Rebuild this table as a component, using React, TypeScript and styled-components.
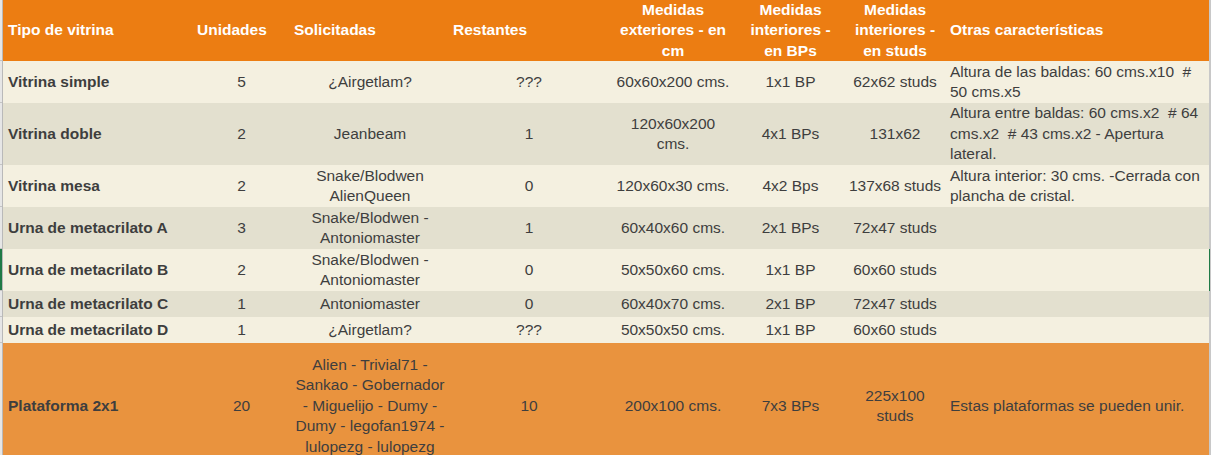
import React from "react";
import styled, { createGlobalStyle, css } from "styled-components";

const GlobalStyle = createGlobalStyle`
  html, body { margin: 0; padding: 0; background: #ffffff; }
  body { font-family: "Liberation Sans", Arial, sans-serif; overflow: hidden; }
`;

const COLS = "3px 190px 97px 160px 158px 130px 105px 104px 262px 2px";

type Tone = "header" | "light" | "alt" | "accent";

const toneBg: Record<Tone, string> = {
  header: "#ec7d12",
  light: "#f4f0e0",
  alt: "#e3e0cf",
  accent: "#e9933e",
};

const Sheet = styled.div`
  width: 1211px;
  display: flex;
  flex-direction: column;
`;

const Row = styled.div<{ $h: number; $tone: Tone }>`
  display: grid;
  grid-template-columns: ${COLS};
  height: ${(p) => p.$h}px;
  flex: none;
  background: ${(p) => toneBg[p.$tone]};
  color: ${(p) => (p.$tone === "header" ? "#ffffff" : "#3e3e3e")};
  font-weight: ${(p) => (p.$tone === "header" ? 700 : 400)};
`;

const LeftGutter = styled.div<{ $marked?: boolean }>`
  background: ${(p) => (p.$marked ? "#1f7a46" : "#e6e6e6")};
  border-right: 1px solid #b9b9b9;
  box-shadow: inset 0 -1px 0 #c4c4c4;
`;

const RightGutter = styled.div<{ $marked?: boolean }>`
  background: #c8c8c8;
  border-left: 1px solid ${(p) => (p.$marked ? "#1f7a46" : "#c8c8c8")};
`;

const Cell = styled.div<{ $align?: "left" | "center"; $bold?: boolean; $pad?: number }>`
  display: flex;
  flex-direction: column;
  justify-content: center;
  align-items: ${(p) => (p.$align === "left" ? "flex-start" : "center")};
  text-align: ${(p) => (p.$align === "left" ? "left" : "center")};
  padding: 0 ${(p) => p.$pad ?? 3}px;
  font-size: 15.5px;
  line-height: 20.5px;
  white-space: pre;
  overflow: hidden;
  ${(p) =>
    p.$bold &&
    css`
      font-weight: 700;
    `}
`;

const Line = styled.span`
  display: block;
`;

type Data = {
  name: string;
  u: string;
  sol: string[];
  rest: string;
  ext: string[];
  bp: string[];
  studs: string[];
  otras: string[];
  h: number;
  tone: Tone;
  selected?: boolean;
};

const rows: Data[] = [
  {
    name: "Vitrina simple",
    u: "5",
    sol: ["¿Airgetlam?"],
    rest: "???",
    ext: ["60x60x200 cms."],
    bp: ["1x1 BP"],
    studs: ["62x62 studs"],
    otras: ["Altura de las baldas: 60 cms.x10  #", "50 cms.x5"],
    h: 42,
    tone: "light",
  },
  {
    name: "Vitrina doble",
    u: "2",
    sol: ["Jeanbeam"],
    rest: "1",
    ext: ["120x60x200", "cms."],
    bp: ["4x1 BPs"],
    studs: ["131x62"],
    otras: ["Altura entre baldas: 60 cms.x2  # 64", "cms.x2  # 43 cms.x2 - Apertura", "lateral."],
    h: 62,
    tone: "alt",
  },
  {
    name: "Vitrina mesa",
    u: "2",
    sol: ["Snake/Blodwen", "AlienQueen"],
    rest: "0",
    ext: ["120x60x30 cms."],
    bp: ["4x2 Bps"],
    studs: ["137x68 studs"],
    otras: ["Altura interior: 30 cms. -Cerrada con", "plancha de cristal."],
    h: 42,
    tone: "light",
  },
  {
    name: "Urna de metacrilato A",
    u: "3",
    sol: ["Snake/Blodwen -", "Antoniomaster"],
    rest: "1",
    ext: ["60x40x60 cms."],
    bp: ["2x1 BPs"],
    studs: ["72x47 studs"],
    otras: [],
    h: 42,
    tone: "alt",
  },
  {
    name: "Urna de metacrilato B",
    u: "2",
    sol: ["Snake/Blodwen -", "Antoniomaster"],
    rest: "0",
    ext: ["50x50x60 cms."],
    bp: ["1x1 BP"],
    studs: ["60x60 studs"],
    otras: [],
    h: 42,
    tone: "light",
    selected: true,
  },
  {
    name: "Urna de metacrilato C",
    u: "1",
    sol: ["Antoniomaster"],
    rest: "0",
    ext: ["60x40x70 cms."],
    bp: ["2x1 BP"],
    studs: ["72x47 studs"],
    otras: [],
    h: 26,
    tone: "alt",
  },
  {
    name: "Urna de metacrilato D",
    u: "1",
    sol: ["¿Airgetlam?"],
    rest: "???",
    ext: ["50x50x50 cms."],
    bp: ["1x1 BP"],
    studs: ["60x60 studs"],
    otras: [],
    h: 26,
    tone: "light",
  },
  {
    name: "Plataforma 2x1",
    u: "20",
    sol: ["Alien - Trivial71 -", "Sankao - Gobernador", "- Miguelijo - Dumy -", "Dumy - legofan1974 -", "lulopezg - lulopezg"],
    rest: "10",
    ext: ["200x100 cms."],
    bp: ["7x3 BPs"],
    studs: ["225x100", "studs"],
    otras: ["Estas plataformas se pueden unir."],
    h: 126,
    tone: "accent",
  },
];

const Lines = ({ items }: { items: string[] }) => (
  <>
    {items.map((t, i) => (
      <Line key={i}>{t}</Line>
    ))}
  </>
);

export default function App() {
  return (
    <>
      <GlobalStyle />
      <Sheet>
        <Row $h={61} $tone="header">
          <LeftGutter />
          <Cell $align="left" $pad={5}>Tipo de vitrina</Cell>
          <Cell $align="left" $pad={4}>Unidades</Cell>
          <Cell $align="left" $pad={4}>Solicitadas</Cell>
          <Cell $align="left" $pad={3}>Restantes</Cell>
          <Cell>
            <Lines items={["Medidas", "exteriores - en", "cm"]} />
          </Cell>
          <Cell>
            <Lines items={["Medidas", "interiores -", "en BPs"]} />
          </Cell>
          <Cell>
            <Lines items={["Medidas", "interiores -", "en studs"]} />
          </Cell>
          <Cell $align="left">Otras características</Cell>
          <RightGutter />
        </Row>
        {rows.map((r) => (
          <Row key={r.name} $h={r.h} $tone={r.tone}>
            <LeftGutter $marked={r.selected} />
            <Cell $align="left" $bold $pad={5}>{r.name}</Cell>
            <Cell>{r.u}</Cell>
            <Cell>
              <Lines items={r.sol} />
            </Cell>
            <Cell>{r.rest}</Cell>
            <Cell>
              <Lines items={r.ext} />
            </Cell>
            <Cell>
              <Lines items={r.bp} />
            </Cell>
            <Cell>
              <Lines items={r.studs} />
            </Cell>
            <Cell $align="left">
              <Lines items={r.otras} />
            </Cell>
            <RightGutter $marked={r.selected} />
          </Row>
        ))}
      </Sheet>
    </>
  );
}
